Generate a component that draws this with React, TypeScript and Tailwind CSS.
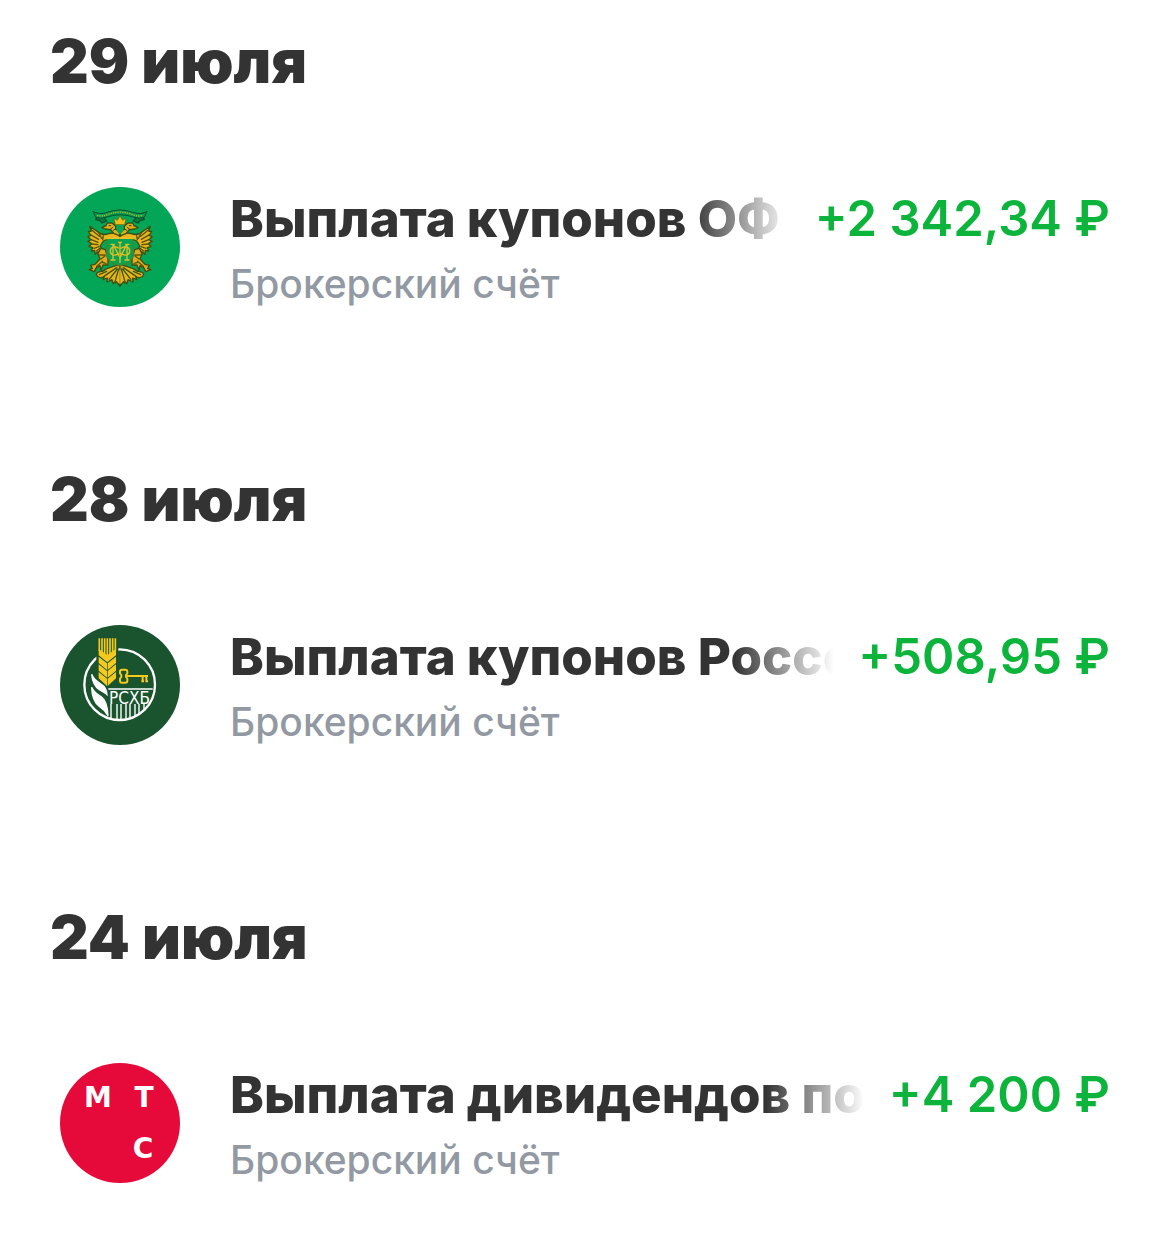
import React from "react";

type Entry = {
  date: string;
  title: string;
  amount: string;
  logo: React.ReactNode;
};

function EagleHalf() {
  return (
    <g strokeLinejoin="round" strokeLinecap="round">
      <path d="M52 34 47 44 60 47 66 54 80 48 72 38Z" fill="#067c40" stroke="#05502c" strokeWidth="4" />
      <path
        d="M118 76 100 84 86 86C70 92 60 88 50 78L29 64 34 78 25 80 33 91 24 95 33 104 24 109 35 116 27 124 38 128 34 138 44 136 45 148 54 140 61 147 67 132 60 124 70 108 80 104 84 98 118 98Z"
        fill="#e9b51c"
        stroke="#3f4d12"
        strokeWidth="4"
      />
      <path d="M34 74 58 94M31 89 56 103M32 103 54 112M34 117 54 119M42 130 57 125M49 138 60 130M57 84l8 16M70 92l-2 12" fill="none" stroke="#5a5410" strokeWidth="4" />
      <path d="M119 92 102 86 92 74 76 72 66 68 78 62 82 54 96 54 107 64 107 73 119 78Z" fill="#dfae1e" stroke="#3f4d12" strokeWidth="4" />
      <path d="M87 62h5M90 74l8-7M100 76l7-5" fill="none" stroke="#34430f" strokeWidth="3" />
      <path d="M76 134 62 130 54 146 60 162 45 178 32 181 37 190 28 194 43 200 49 188 60 182 63 196 69 180 84 180 84 164Z" fill="#dfae1e" stroke="#3f4d12" strokeWidth="4" />
      <path d="M59 150h16M63 162l12-9M50 184l18-15M68 173l10 2" fill="none" stroke="#5a5410" strokeWidth="4" />
      <path d="M107 182C93 187 80 188 70 198C60 200 50 199 49 209C54 220 66 220 74 213L69 224 82 219 81 231 96 224 100 236 109 230 120 243V182Z" fill="#e9b51c" stroke="#3f4d12" strokeWidth="4" />
      <path d="M110 188 76 211M112 192 87 224M116 192 105 230M58 209l22-10" fill="none" stroke="#3f5512" strokeWidth="4" />
      <path d="M120 100H80V150C82 167 96 176 120 183Z" fill="#04a555" stroke="#6f7416" strokeWidth="3" />
      <path d="M80 99H120" stroke="#e9bd25" strokeWidth="6" />
      <path d="M99 118v46M93 118h10M93 165h12M100 119 120 158M117 130C105 121 91 124 91 138S106 154 117 145" fill="none" stroke="#e7bd24" strokeWidth="4" />
    </g>
  );
}

function TreasuryLogo() {
  return (
    <svg viewBox="0 0 120 120" className="size-[120px] shrink-0" aria-hidden="true">
      <circle cx="60" cy="60" r="60" fill="#03a656" />
      <g transform="translate(20 18) scale(.333333)">
        <EagleHalf />
        <g transform="translate(240 0) scale(-1 1)">
          <EagleHalf />
        </g>
        <path d="M39 19Q56 30 82 22Q120 8 158 22Q184 30 201 19L193 37Q176 43 156 35Q120 24 84 35Q64 43 47 37Z" fill="#07994e" stroke="#05502c" strokeWidth="3" strokeLinejoin="round" />
        <path d="M51 31Q66 36 84 28Q120 15 156 28Q174 36 189 31" fill="none" stroke="#b5ba2c" strokeWidth="4" strokeDasharray="4 3" />
        <path d="M106 59 102 40 112 46 120 33 128 46 138 40 134 59Z" fill="#efbf18" stroke="#655f12" strokeWidth="2" />
        <path d="M110 64h20v14l-10 11-10-11Z" fill="#04a555" />
        <path d="M120 110v64M114 112h12M120 194v42" stroke="#e7bd24" strokeWidth="4" />
      </g>
    </svg>
  );
}

function AgriculturalBankLogo() {
  return (
    <svg viewBox="0 0 120 120" className="size-[120px] shrink-0" aria-hidden="true">
      <defs>
        <clipPath id="bank-seal">
          <circle cx="59.667" cy="59.667" r="35" />
        </clipPath>
      </defs>
      <circle cx="60" cy="60" r="60" fill="#1a542e" />
      <g transform="translate(15 5) scale(.333333)">
        <circle cx="134" cy="164" r="106" fill="none" stroke="#ffffff" strokeWidth="7" />
        <path d="M64 24h66v142l-33 16-33-24Z" fill="#1a542e" />
        <path d="M73 25v38M81 25v43M89 25v48M97 25v54M105 25v48M113 25v43M121 25v38" fill="none" stroke="#f5c91d" strokeWidth="5" />
        <g fill="#f5c91d">
          <path d="M71 56 97 76 123 56V76L97 97 71 76Z" />
          <path d="M71 80 96 100V120L71 99ZM123 80 98 100V120L123 99Z" />
          <path d="M71 103 96 123V143L71 122ZM123 103 98 123V143L123 122Z" />
          <path d="M71 126 96 146V168L71 145ZM123 126 98 146V168L123 145Z" />
        </g>
        <path d="M50 133Q56 149 78 162Q95 172 96 194Q90 188 73 179Q53 165 50 133ZM50 172Q56 187 78 200Q97 213 99 257Q89 239 73 229Q51 214 50 172Z" fill="#ffffff" stroke="#ffffff" strokeWidth="4" />
        <g fill="none" stroke="#f5c91d" strokeWidth="6">
          <path d="M141 119h10q6 0 6 6v5l-4 5v6l4 5v6q0 6-6 6h-10q-6 0-6-6v-6l4-5v-6l-4-5v-5q0-6 6-6Z" strokeLinejoin="round" />
          <path d="M153 138h66M203 138v18M214 138v18M199 154h8M211 154h8" />
        </g>
        <path d="M100 177H233" stroke="#ffffff" strokeWidth="4" />
      </g>
      <g clipPath="url(#bank-seal)">
        <path d="M51 79V95M57 79V97M61 79V97M66 79V97M70 79V97M75 79V95M79 79V93M84 79V90" stroke="#ffffff" strokeWidth="1.4" />
      </g>
      <text x="49" y="79" fill="#ffffff" className="font-['DejaVu_Sans_Condensed','DejaVu_Sans',sans-serif] text-[17px]">
        РСХБ
      </text>
    </svg>
  );
}

function MtsLogo() {
  return (
    <svg viewBox="0 0 120 120" className="size-[120px] shrink-0" role="img" aria-label="МТС">
      <circle cx="60" cy="60" r="60" fill="#e60a3a" />
      <g fill="#ffffff" textAnchor="middle" className="font-['DejaVu_Sans',sans-serif] text-[28px] font-bold">
        <text x="38" y="44">М</text>
        <text x="84" y="44">Т</text>
        <text x="83" y="95">С</text>
      </g>
    </svg>
  );
}

const entries: Entry[] = [
  { date: "29 июля", title: "Выплата купонов ОФ", amount: "+2 342,34 ₽", logo: <TreasuryLogo /> },
  { date: "28 июля", title: "Выплата купонов Россе", amount: "+508,95 ₽", logo: <AgriculturalBankLogo /> },
  { date: "24 июля", title: "Выплата дивидендов по", amount: "+4 200 ₽", logo: <MtsLogo /> },
];

export default function App() {
  return (
    <main className="bg-white px-[50px] font-['Inter',sans-serif] text-[#333333]">
      {entries.map((entry) => (
        <section key={entry.date} className="pt-[25px] pb-[126px] last:pb-12">
          <h2 className="text-[60px] leading-[72px] font-black">{entry.date}</h2>
          <div className="mt-[90px] flex items-start px-[10px]">
            {entry.logo}
            <div className="ml-[50px] min-w-0 flex-1">
              <div className="flex items-center gap-6">
                <p className="min-w-0 flex-1 overflow-hidden text-[51px] leading-[64px] font-extrabold whitespace-nowrap [mask-image:linear-gradient(to_right,black_calc(100%-100px),transparent)]">
                  {entry.title}
                </p>
                <p className="shrink-0 text-[49px] leading-[64px] font-semibold text-[#0cb43c]">{entry.amount}</p>
              </div>
              <p className="mt-[5px] text-[39px] leading-[56px] font-medium text-[#9299a2]">Брокерский счёт</p>
            </div>
          </div>
        </section>
      ))}
    </main>
  );
}
